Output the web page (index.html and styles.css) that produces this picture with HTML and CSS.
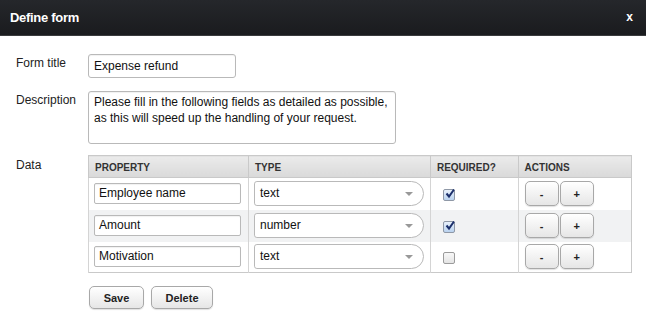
FILE: index.html
```html
<!DOCTYPE html>
<html>
<head>
<meta charset="utf-8">
<link rel="stylesheet" href="styles.css">
</head>
<body>
<div class="dialog">
  <div class="titlebar">
    <span class="title">Define form</span>
    <span class="close">x</span>
  </div>
  <div class="content">
    <div class="field">
      <label class="lbl">Form title</label>
      <div class="input title-input">Expense refund</div>
    </div>
    <div class="field desc">
      <label class="lbl">Description</label>
      <div class="input textarea">Please fill in the following fields as detailed as possible,<br>as this will speed up the handling of your request.</div>
    </div>
    <div class="field">
      <label class="lbl data-lbl">Data</label>
      <table class="grid">
        <thead>
          <tr>
            <th class="c-prop">PROPERTY</th>
            <th class="c-type">TYPE</th>
            <th class="c-req">REQUIRED?</th>
            <th class="c-act">ACTIONS</th>
          </tr>
        </thead>
        <tbody>
          <tr>
            <td><div class="input cell-input">Employee name</div></td>
            <td><div class="select">text<span class="arrow"></span></div></td>
            <td><span class="check on"><svg viewBox="0 0 12 12" width="12" height="12"><path d="M2.5 5.5 L5 8.5 L10 1.5" fill="none" stroke="#1b2f6b" stroke-width="2"/></svg></span></td>
            <td><div class="acts"><button class="btn small">-</button><button class="btn small">+</button></div></td>
          </tr>
          <tr class="alt">
            <td><div class="input cell-input">Amount</div></td>
            <td><div class="select">number<span class="arrow"></span></div></td>
            <td><span class="check on"><svg viewBox="0 0 12 12" width="12" height="12"><path d="M2.5 5.5 L5 8.5 L10 1.5" fill="none" stroke="#1b2f6b" stroke-width="2"/></svg></span></td>
            <td><div class="acts"><button class="btn small">-</button><button class="btn small">+</button></div></td>
          </tr>
          <tr>
            <td><div class="input cell-input">Motivation</div></td>
            <td><div class="select">text<span class="arrow"></span></div></td>
            <td><span class="check"></span></td>
            <td><div class="acts"><button class="btn small">-</button><button class="btn small">+</button></div></td>
          </tr>
        </tbody>
      </table>
    </div>
    <div class="buttons">
      <button class="btn">Save</button>
      <button class="btn">Delete</button>
    </div>
  </div>
</div>
</body>
</html>
```

FILE: styles.css
```css
* { box-sizing: border-box; }
html, body { margin: 0; padding: 0; background: #fff; }
body { font-family: "Liberation Sans", Arial, sans-serif; font-size: 12px; color: #222; width: 646px; height: 328px; overflow: hidden; }
.titlebar {
  height: 36px;
  background: linear-gradient(#25272b, #1a1b1e);
  border-bottom: 1px solid #3a3b3d;
  display: flex;
  align-items: center;
  justify-content: space-between;
  padding: 0 12px 1px 10px;
}
.title { color: #fff; font-weight: bold; font-size: 13px; letter-spacing: -0.3px; }
.close { color: #fff; font-weight: bold; font-size: 12px; margin-right: 1px; }
.content { padding: 18px 14px 0 16px; }
.field { display: flex; align-items: flex-start; margin-bottom: 13px; }
.field.desc { margin-bottom: 11px; }
.lbl { width: 72px; flex: none; font-size: 12px; color: #222; padding-top: 2px; }
.input {
  border: 1px solid #b9b9b9;
  border-radius: 3px;
  background: #fff;
  font-size: 12px;
  color: #111;
  padding: 4px 5px;
  line-height: 14px;
  box-shadow: inset 0 1px 1px rgba(0,0,0,0.06);
}
.title-input { width: 148px; height: 24px; }
.textarea { width: 308px; height: 53px; padding: 2px 5px; line-height: 16px; }
.data-lbl { padding-top: 3px; }
.grid {
  border-collapse: collapse;
  width: 544px;
  border: 1px solid #c9c9c9;
  font-size: 12px;
}
.grid th {
  height: 22px;
  background: linear-gradient(#ebebeb, #d9d9d9);
  text-align: left;
  font-size: 10px;
  font-weight: bold;
  color: #333;
  padding: 1px 6px 0;
  border-left: 1px solid #c9c9c9;
  border-bottom: 1px solid #c9c9c9;
}
.c-prop { width: 160px; }
.c-type { width: 182px; }
.c-req { width: 88px; }
.c-act { width: 114px; }
.grid td { height: 32px; padding: 0 5px; border-left: 1px solid #d4d4d4; vertical-align: middle; }
.grid tr:last-child td { height: 31px; }
.grid tr.alt td { background: #f1f2f3; }
.cell-input { width: 147px; height: 21px; padding: 2px 4px; line-height: 15px; border-radius: 2px; }
.select {
  position: relative;
  width: 170px;
  height: 25px;
  border: 1px solid #b9b9b9;
  border-radius: 3px 13px 13px 3px;
  background: #fff;
  padding: 4px 5px;
  line-height: 15px;
  color: #111;
}
.arrow {
  position: absolute;
  right: 10px;
  top: 10px;
  width: 0; height: 0;
  border-left: 4px solid transparent;
  border-right: 4px solid transparent;
  border-top: 4px solid #999;
}
.check {
  display: inline-block;
  width: 12px; height: 12px;
  margin-left: 7px;
  margin-top: 3px;
  border: 1px solid #8f98a6;
  border-radius: 2px;
  background: linear-gradient(#e9f1fb, #b9d2ef);
  position: relative;
  vertical-align: middle;
}
.check svg { position: absolute; left: 0; top: -2px; }
.check:not(.on) { background: linear-gradient(#f8f8f8, #e4e4e4); border-color: #9b9b9b; }
.acts { display: flex; gap: 1px; padding-left: 1px; }
.btn {
  font-family: "Liberation Sans", Arial, sans-serif;
  font-weight: bold;
  font-size: 11px;
  color: #222;
  background: linear-gradient(#ffffff, #e6e6e6);
  border: 1px solid #a8a8a8;
  border-radius: 5px;
  box-shadow: 0 1px 1px rgba(0,0,0,0.12);
  height: 23px;
  padding: 0 10px;
  cursor: pointer;
}
.btn.small { width: 34px; height: 25px; padding: 0; }
.buttons { display: flex; gap: 7px; padding-left: 73px; margin-top: 2px; }
.buttons .btn:first-child { width: 55px; }
.buttons .btn:last-child { width: 62px; }
```
